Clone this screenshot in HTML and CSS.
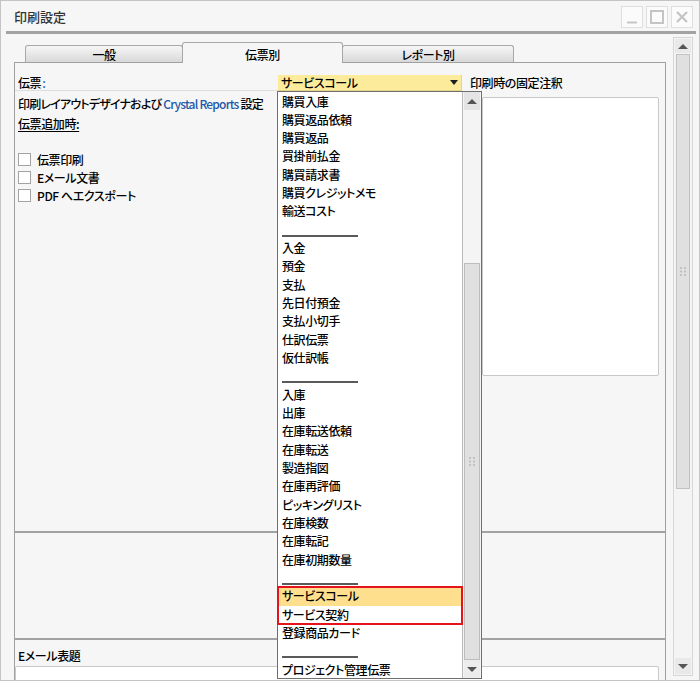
FILE: index.html
```html
<!DOCTYPE html>
<html lang="ja">
<head>
<meta charset="utf-8">
<title>印刷設定</title>
<link rel="stylesheet" href="styles.css">
</head>
<body>
<div class="window">
  <div class="titlebar">
    <div class="title">印刷設定</div>
    <div class="wbtns">
      <span class="wbtn"><svg width="20" height="20" viewBox="0 0 20 20"><path d="M5 15.5H15" stroke="#c4c4c4" stroke-width="2"/></svg></span>
      <span class="wbtn"><svg width="20" height="20" viewBox="0 0 20 20"><rect x="4" y="4" width="12" height="12" fill="none" stroke="#c4c4c4" stroke-width="2"/></svg></span>
      <span class="wbtn"><svg width="20" height="20" viewBox="0 0 20 20"><path d="M5 5L15 15M15 5L5 15" stroke="#c4c4c4" stroke-width="2.2"/></svg></span>
    </div>
  </div>
  <div class="divider"></div>
  <div class="client">
    <div class="main">
      <div class="tabs">
        <div class="tab t1">一般</div>
        <div class="tab t2 active">伝票別</div>
        <div class="tab t3">レポート別</div>
      </div>
      <div class="panel">
        <div class="sec-top">
          <div class="row1">
            <div class="lbl-doc">伝票<span class="colon">:</span></div>
            <div class="combo">
              <span class="combo-val">サービスコール</span>
              <span class="caret"></span>
              <div class="popup">
                <div class="items">
                  <div class="item">購買入庫</div>
                  <div class="item">購買返品依頼</div>
                  <div class="item">購買返品</div>
                  <div class="item">買掛前払金</div>
                  <div class="item">購買請求書</div>
                  <div class="item">購買クレジットメモ</div>
                  <div class="item">輸送コスト</div>
                  <div class="item sep"></div>
                  <div class="item">入金</div>
                  <div class="item">預金</div>
                  <div class="item">支払</div>
                  <div class="item">先日付預金</div>
                  <div class="item">支払小切手</div>
                  <div class="item">仕訳伝票</div>
                  <div class="item">仮仕訳帳</div>
                  <div class="item sep"></div>
                  <div class="item">入庫</div>
                  <div class="item">出庫</div>
                  <div class="item">在庫転送依頼</div>
                  <div class="item">在庫転送</div>
                  <div class="item">製造指図</div>
                  <div class="item">在庫再評価</div>
                  <div class="item">ピッキングリスト</div>
                  <div class="item">在庫検数</div>
                  <div class="item">在庫転記</div>
                  <div class="item">在庫初期数量</div>
                  <div class="item sep"></div>
                  <div class="hl-group">
                    <div class="item selected">サービスコール</div>
                    <div class="item">サービス契約</div>
                  </div>
                  <div class="item">登録商品カード</div>
                  <div class="item sep"></div>
                  <div class="item">プロジェクト管理伝票</div>
                </div>
                <div class="lscroll">
                  <div class="sbtn"><span class="tri-up"></span></div>
                  <div class="ltrack"></div>
                  <div class="lthumb"><svg width="6" height="9" viewBox="0 0 6 9"><g fill="#b4b4b4"><circle cx="1" cy="1" r="0.9"/><circle cx="5" cy="1" r="0.9"/><circle cx="1" cy="4.5" r="0.9"/><circle cx="5" cy="4.5" r="0.9"/><circle cx="1" cy="8" r="0.9"/><circle cx="5" cy="8" r="0.9"/></g></svg></div>
                  <div class="sbtn down"><span class="tri-down"></span></div>
                </div>
              </div>
            </div>
            <div class="lbl-note">印刷時の固定注釈</div>
          </div>
          <div class="row2">
            <div class="left">
              <div class="line tight">印刷レイアウトデザイナおよび <span class="blue">Crystal Reports</span> 設定</div>
              <div class="line"><span class="u">伝票追加時:</span></div>
              <div class="checks">
                <div class="chk"><span class="box"></span>伝票印刷</div>
                <div class="chk"><span class="box"></span>Eメール文書</div>
                <div class="chk"><span class="box"></span>PDF へエクスポート</div>
              </div>
            </div>
            <div class="gapcol"></div>
            <div class="note-box"></div>
          </div>
        </div>
        <div class="sec-mid"></div>
        <div class="sec-email">
          <div class="email-lbl">Eメール表題</div>
          <div class="email-input"></div>
        </div>
      </div>
    </div>
    <div class="vscroll">
      <div class="vbtn"><span class="tri-up"></span></div>
      <div class="vthumb"><svg width="6" height="9" viewBox="0 0 6 9"><g fill="#b4b4b4"><circle cx="1" cy="1" r="0.9"/><circle cx="5" cy="1" r="0.9"/><circle cx="1" cy="4.5" r="0.9"/><circle cx="5" cy="4.5" r="0.9"/><circle cx="1" cy="8" r="0.9"/><circle cx="5" cy="8" r="0.9"/></g></svg></div>
      <div class="vtrack"></div>
      <div class="vbtn down"><span class="tri-down"></span></div>
    </div>
  </div>
</div>
</body>
</html>
```

FILE: styles.css
```css
* { box-sizing: border-box; }
html, body { margin: 0; padding: 0; background: #ffffff; }
body {
  font-family: "Noto Sans CJK JP", "Noto Sans", sans-serif;
  font-size: 12px;
  font-weight: 500;
  color: #000;
  letter-spacing: -0.4px;
  font-feature-settings: "palt";
}

.window {
  width: 700px;
  height: 681px;
  border: 1px solid #c4c4c4;
  background: #f6f6f6;
  display: flex;
  flex-direction: column;
  overflow: hidden;
}

.titlebar {
  flex: none;
  height: 30px;
  display: flex;
  align-items: center;
  justify-content: space-between;
  padding: 0 6px 0 13px;
}
.title { font-size: 13px; color: #333; padding-top: 1px; letter-spacing: 0; }
.wbtns { display: flex; gap: 3px; margin-top: 2px; }
.wbtn {
  width: 22px;
  height: 22px;
  border: 1px solid #dedede;
  background: #fbfbfb;
  display: flex;
  align-items: center;
  justify-content: center;
}
.wbtn svg { display: block; }

.divider {
  flex: none;
  height: 3px;
  margin: 0 3px 0 5px;
  background: #a3a3a3;
}

.client {
  flex: 1;
  min-height: 0;
  display: flex;
  padding: 0 6px 0 13px;
}

.main {
  width: 652px;
  margin-right: 7px;
  display: flex;
  flex-direction: column;
}

.tabs {
  flex: none;
  height: 20px;
  margin-top: 8px;
  padding-left: 11px;
  display: flex;
  align-items: flex-end;
  position: relative;
  z-index: 2;
}
.tab {
  height: 17px;
  border: 1px solid #a8a8a8;
  border-bottom: none;
  border-radius: 3px 3px 0 0;
  background: linear-gradient(#f6f6f6, #d9d9d9);
  text-align: center;
  line-height: 16px;
  padding-top: 1px;
}
.t1 { width: 158px; }
.t2 { width: 161px; margin-left: -1px; }
.t3 { width: 172px; margin-left: -1px; }
.tab.active {
  height: 21px;
  margin-bottom: -1px;
  background: #f6f6f6;
  padding-top: 4px;
  position: relative;
  z-index: 3;
}

.panel {
  flex: 1;
  border: 1px solid #a0a0a0;
  border-bottom: none;
  background: #f6f6f6;
  display: flex;
  flex-direction: column;
  position: relative;
  z-index: 1;
}

.sec-top {
  flex: none;
  height: 470px;
  border-bottom: 2px solid #a2a2a2;
  position: relative;
  z-index: 2;
}
.row1 {
  display: grid;
  grid-template-columns: 263px 184px 1fr;
  height: 16px;
  margin-top: 12px;
}
.lbl-doc {
  padding-left: 3px;
  line-height: 15px;
  border-bottom: 1px solid #dedede;
}
.colon { color: #3d6fc0; margin-left: 1px; }
.combo {
  position: relative;
  background: #fdeb9c;
  border-right: 1px solid #e6d48a;
  border-bottom: 1px solid #e6d48a;
  padding-left: 3px;
  line-height: 15px;
  display: flex;
  justify-content: space-between;
  align-items: center;
}
.caret {
  width: 0;
  height: 0;
  border-top: 5px solid #1e1e1e;
  border-left: 4px solid transparent;
  border-right: 4px solid transparent;
  margin-right: 3px;
}
.lbl-note { padding-left: 8px; line-height: 16px; }

.popup {
  position: absolute;
  top: 16px;
  left: -1px;
  width: 205px;
  height: 588px;
  border: 1px solid #6f6f6f;
  background: #ffffff;
  display: flex;
  z-index: 10;
}
.items {
  width: 184px;
  padding-top: 0.5px;
}
.item {
  height: 18.33px;
  line-height: 18.33px;
  padding-left: 4px;
  white-space: nowrap;
}
.item.sep { position: relative; }
.item.sep::after {
  content: "";
  position: absolute;
  left: 4px;
  top: 14px;
  width: 76px;
  height: 2px;
  background: #5a5a5a;
}
.hl-group {
  outline: 2px solid #e5131c;
  outline-offset: -1px;
  position: relative;
}
.item.selected { background: #fedf8d; }

.lscroll {
  width: 19px;
  border-left: 1px solid #b9b9b9;
  background: #f4f4f4;
  display: flex;
  flex-direction: column;
}
.sbtn {
  height: 18px;
  flex: none;
  background: #e4e4e4;
  margin: 0 1px;
  display: flex;
  align-items: center;
  justify-content: center;
}
.sbtn.down { background: #ececec; }
.ltrack { height: 153px; flex: none; }
.lthumb {
  height: 397px;
  flex: none;
  margin: 0 1px;
  background: #e0e0e0;
  border: 1px solid #bdbdbd;
  display: flex;
  align-items: center;
  justify-content: center;
}
.lthumb svg, .vthumb svg { display: block; }

.tri-up {
  width: 0; height: 0;
  border-bottom: 5px solid #555;
  border-left: 5px solid transparent;
  border-right: 5px solid transparent;
}
.tri-down {
  width: 0; height: 0;
  border-top: 5px solid #555;
  border-left: 5px solid transparent;
  border-right: 5px solid transparent;
}

.row2 {
  display: grid;
  grid-template-columns: 263px 184px 1fr;
}
.left { padding-left: 3px; padding-top: 3px; min-width: 0; }
.line { line-height: 20px; white-space: nowrap; }
.line.tight { letter-spacing: -0.8px; }
.blue { color: #2558a8; }
.u { text-decoration: underline; text-underline-offset: 2px; }
.checks { margin-top: 16px; }
.chk {
  height: 18px;
  display: flex;
  align-items: center;
  gap: 6px;
}
.box {
  width: 13px;
  height: 13px;
  border: 1px solid #a3a3a3;
  background: #ffffff;
}
.note-box {
  margin: 6px 6px 0 20px;
  height: 279px;
  background: #ffffff;
  border: 1px solid #c8c8c8;
  border-radius: 2px;
}

.sec-mid {
  flex: none;
  height: 107px;
  border-bottom: 2px solid #a2a2a2;
}
.sec-email { padding-top: 7px; }
.email-lbl { padding-left: 3px; line-height: 18px; }
.email-input {
  margin: 1px 6px 0 0;
  height: 20px;
  background: #ffffff;
  border: 1px solid #c9c9c9;
  border-bottom: none;
  border-radius: 2px 2px 0 0;
}

.vscroll {
  width: 20px;
  margin: 3px 0 4px;
  border: 1px solid #d6d6d6;
  background: #f4f4f4;
  padding: 1px;
  display: flex;
  flex-direction: column;
}
.vbtn {
  flex: none;
  height: 14px;
  background: #e9e9e9;
  display: flex;
  align-items: center;
  justify-content: center;
}
.vbtn.down { height: 16px; }
.vthumb {
  flex: none;
  height: 435px;
  margin: 1px 1px 0;
  background: #e0e0e0;
  border: 1px solid #c2c2c2;
  display: flex;
  align-items: center;
  justify-content: center;
}
.vtrack { flex: 1; }
```
